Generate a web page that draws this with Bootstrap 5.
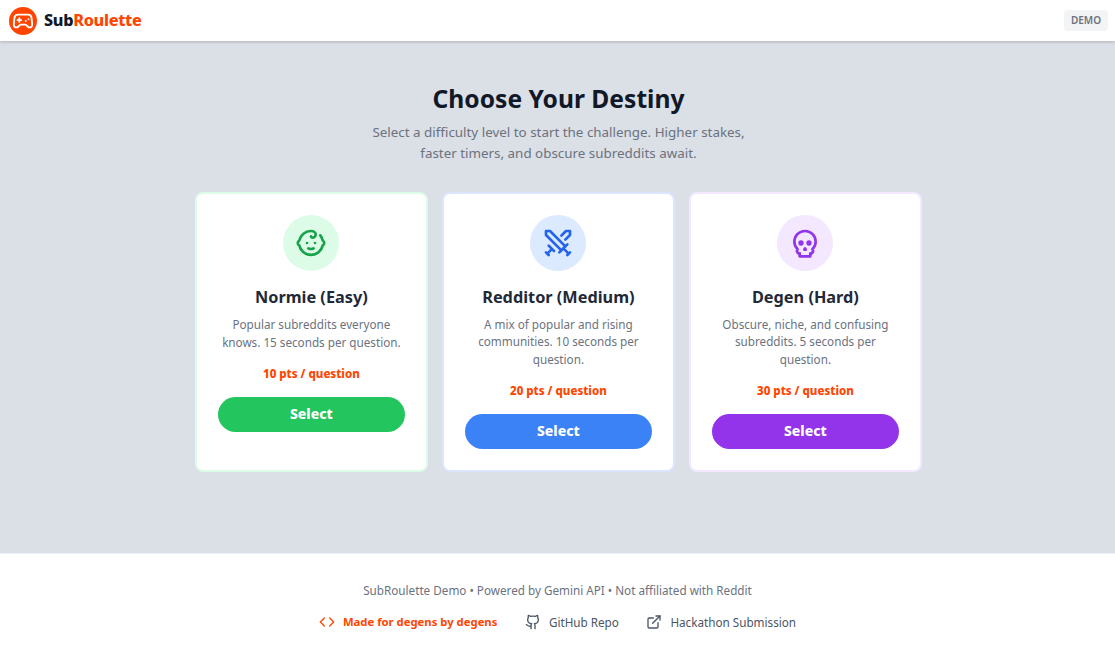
<!DOCTYPE html>
<html lang="en">
<head>
    <meta charset="UTF-8">
    <title>SubRoulette</title>
    <meta name="viewport" content="width=device-width, initial-scale=1">
    <link href="https://cdn.jsdelivr.net/npm/bootstrap@5.3.0/dist/css/bootstrap.min.css" rel="stylesheet">
    <style>
        body {
            height: 653px;
            overflow: hidden;
            font-family: "Noto Sans", "Liberation Sans", sans-serif;
            background: #fff;
            color: #111827;
        }
        .top-bar {
            height: 41px;
            padding: 0 7px 0 9px;
            box-shadow: 0 1px 3px rgba(0, 0, 0, .2);
            position: relative;
            z-index: 2;
        }
        .logo-disc {
            width: 28px;
            height: 28px;
            background: #ff4500;
        }
        .logo-text {
            font-size: 16.2px;
            font-weight: 800;
            letter-spacing: -.3px;
            color: #111827;
            margin-left: 7px;
        }
        .logo-text span { color: #ff4500; }
        .demo-tag {
            background: #f3f4f6;
            color: #6b7280;
            font-size: 10px;
            font-weight: 600;
            line-height: 15px;
            padding: 3px 7px;
            border-radius: 4px;
        }
        .stage {
            height: 512px;
            background: #dbdfe6;
            padding-top: 42px;
        }
        .stage-title {
            font-size: 24.6px;
            font-weight: 700;
            line-height: 32px;
            margin-bottom: 7px;
            margin-left: 2px;
            color: #111827;
        }
        .stage-sub {
            font-size: 13.4px;
            line-height: 21px;
            color: #6b7280;
            margin-bottom: 28px;
            margin-left: 2px;
        }
        .level-row {
            width: 727px;
            gap: 14.05px;
            margin-left: 1.8px;
        }
        .level-card {
            width: 233px;
            height: 280px;
            padding: 21px;
            background: #fff;
            border-radius: 8px;
            border: 2px solid;
        }
        .level-easy { border-color: #dcfce7; }
        .level-mid { border-color: #dbe6fe; }
        .level-hard { border-color: #f3e8ff; }
        .level-disc {
            width: 56px;
            height: 56px;
            margin-bottom: 15px;
        }
        .level-easy .level-disc { background: #dcfce7; color: #16a34a; }
        .level-mid .level-disc { background: #dbeafe; color: #2563eb; }
        .level-hard .level-disc { background: #f3e8ff; color: #9333ea; }
        .level-name {
            font-size: 16.3px;
            font-weight: 700;
            line-height: 22px;
            margin-bottom: 8px;
            color: #1f2937;
        }
        .level-desc {
            font-size: 11.7px;
            line-height: 17.5px;
            color: #6b7280;
            margin-bottom: 14px;
        }
        .level-pts {
            font-size: 11.5px;
            font-weight: 800;
            line-height: 18px;
            color: #ff4500;
            margin-bottom: 14px;
        }
        .pick-btn {
            height: 35px;
            border: 0;
            border-radius: 18px;
            padding: 0 0 2px;
            color: #fff;
            font-size: 14px;
            font-weight: 800;
            flex-shrink: 0;
        }
        .level-easy .pick-btn { background: #22c55e; }
        .level-mid .pick-btn { background: #3b82f6; }
        .level-hard .pick-btn { background: #9333ea; }
        .foot {
            height: 100px;
            padding-top: 28px;
            border-top: 1px solid #eef0f3;
        }
        .foot-line {
            font-size: 11.7px;
            line-height: 17px;
            color: #6b7280;
            margin-bottom: 14px;
        }
        .foot-links { gap: 27.5px; font-size: 11.7px; line-height: 18px; }
        .foot-item { color: #4b5563; text-decoration: none; }
        .foot-item.foot-made { color: #ff4500; font-weight: 700; font-size: 11.3px; }
    </style>
</head>
<body>
    <nav class="top-bar d-flex align-items-center justify-content-between bg-white">
        <div class="d-flex align-items-center">
            <div class="logo-disc rounded-circle d-flex align-items-center justify-content-center">
                <svg width="22" height="22" viewBox="0 0 24 24" fill="none" stroke="#fff" stroke-width="2" stroke-linecap="round" stroke-linejoin="round"><line x1="6" y1="11" x2="10" y2="11"/><line x1="8" y1="9" x2="8" y2="13"/><line x1="15" y1="12" x2="15.01" y2="12"/><line x1="18" y1="10" x2="18.01" y2="10"/><path d="M17.32 5H6.68a4 4 0 0 0-3.98 3.59c-.01.05-.01.1-.02.15C2.6 9.42 2 14.46 2 16a3 3 0 0 0 3 3c1 0 1.5-.5 2-1l1.41-1.41A2 2 0 0 1 9.83 16h4.34a2 2 0 0 1 1.41.59L17 18c.5.5 1 1 2 1a3 3 0 0 0 3-3c0-1.55-.6-6.58-.68-7.26-.01-.05-.01-.1-.02-.15A4 4 0 0 0 17.32 5z"/></svg>
            </div>
            <div class="logo-text">Sub<span>Roulette</span></div>
        </div>
        <div class="demo-tag">DEMO</div>
    </nav>

    <main class="stage d-flex flex-column align-items-center text-center">
        <h1 class="stage-title">Choose Your Destiny</h1>
        <p class="stage-sub">Select a difficulty level to start the challenge. Higher stakes,<br>faster timers, and obscure subreddits await.</p>
        <div class="level-row d-flex">
            <div class="level-card level-easy d-flex flex-column align-items-center">
                <div class="level-disc rounded-circle d-flex align-items-center justify-content-center">
                    <svg width="32" height="32" viewBox="0 0 24 24" fill="none" stroke="currentColor" stroke-width="2" stroke-linecap="round" stroke-linejoin="round"><path d="M9 12h.01"/><path d="M15 12h.01"/><path d="M10 16c.5.3 1.2.5 2 .5s1.500-.2 2-.5"/><path d="M19 6.300a9 9 0 0 1 1.800 3.900 2 2 0 0 1 0 3.600 9 9 0 0 1-17.600 0 2 2 0 0 1 0-3.600A9 9 0 0 1 12 3c2 0 3.500 1.100 3.500 2.500s-.9 2.500-2 2.500c-.8 0-1.500-.4-1.500-1"/></svg>
                </div>
                <h2 class="level-name">Normie (Easy)</h2>
                <p class="level-desc">Popular subreddits everyone knows. 15 seconds per question.</p>
                <div class="level-pts">10 pts / question</div>
                <button class="pick-btn w-100">Select</button>
            </div>
            <div class="level-card level-mid d-flex flex-column align-items-center">
                <div class="level-disc rounded-circle d-flex align-items-center justify-content-center">
                    <svg width="32" height="32" viewBox="0 0 24 24" fill="none" stroke="currentColor" stroke-width="2" stroke-linecap="round" stroke-linejoin="round"><polyline points="14.500 17.500 3 6 3 3 6 3 17.500 14.500"/><line x1="13" y1="19" x2="19" y2="13"/><line x1="16" y1="16" x2="20" y2="20"/><line x1="19" y1="21" x2="21" y2="19"/><polyline points="14.500 6.500 18 3 21 3 21 6 17.500 9.500"/><line x1="5" y1="14" x2="9" y2="18"/><line x1="7" y1="17" x2="4" y2="20"/><line x1="3" y1="19" x2="5" y2="21"/></svg>
                </div>
                <h2 class="level-name">Redditor (Medium)</h2>
                <p class="level-desc">A mix of popular and rising communities. 10 seconds per question.</p>
                <div class="level-pts">20 pts / question</div>
                <button class="pick-btn w-100">Select</button>
            </div>
            <div class="level-card level-hard d-flex flex-column align-items-center">
                <div class="level-disc rounded-circle d-flex align-items-center justify-content-center">
                    <svg width="32" height="32" viewBox="0 0 24 24" fill="none" stroke="currentColor" stroke-width="2" stroke-linecap="round" stroke-linejoin="round"><circle cx="9" cy="12" r="1"/><circle cx="15" cy="12" r="1"/><path d="M8 20v2h8v-2"/><path d="m12.500 17-.5-1-.5 1h1z"/><path d="M16 20a2 2 0 0 0 1.560-3.250 8 8 0 1 0-11.120 0A2 2 0 0 0 8 20"/></svg>
                </div>
                <h2 class="level-name">Degen (Hard)</h2>
                <p class="level-desc">Obscure, niche, and confusing subreddits. 5 seconds per question.</p>
                <div class="level-pts">30 pts / question</div>
                <button class="pick-btn w-100">Select</button>
            </div>
        </div>
    </main>

    <footer class="foot text-center bg-white">
        <div class="foot-line">SubRoulette Demo • Powered by Gemini API • Not affiliated with Reddit</div>
        <div class="foot-links d-flex justify-content-center align-items-center">
            <a href="#" class="foot-item foot-made d-flex align-items-center gap-2">
                <svg width="16" height="16" viewBox="0 0 24 24" fill="none" stroke="currentColor" stroke-width="2" stroke-linecap="round" stroke-linejoin="round"><polyline points="16 18 22 12 16 6"/><polyline points="8 6 2 12 8 18"/></svg>
                <span>Made for degens by degens</span>
            </a>
            <a href="#" class="foot-item d-flex align-items-center gap-2">
                <svg width="16" height="16" viewBox="0 0 24 24" fill="none" stroke="currentColor" stroke-width="2" stroke-linecap="round" stroke-linejoin="round"><path d="M15 22v-4a4.800 4.800 0 0 0-1-3.500c3 0 6-2 6-5.500.08-1.250-.27-2.480-1-3.500.28-1.150.28-2.350 0-3.500 0 0-1 0-3 1.500-2.640-.5-5.360-.5-8 0C6 2 5 2 5 2c-.3 1.150-.3 2.350 0 3.500A5.400 5.400 0 0 0 4 9c0 3.500 3 5.500 6 5.500-.39.490-.68 1.050-.85 1.650-.17.600-.22 1.230-.15 1.850v4"/><path d="M9 18c-4.510 2-5-2-7-2"/></svg>
                <span>GitHub Repo</span>
            </a>
            <a href="#" class="foot-item d-flex align-items-center gap-2">
                <svg width="16" height="16" viewBox="0 0 24 24" fill="none" stroke="currentColor" stroke-width="2" stroke-linecap="round" stroke-linejoin="round"><path d="M18 13v6a2 2 0 0 1-2 2H5a2 2 0 0 1-2-2V8a2 2 0 0 1 2-2h6"/><polyline points="15 3 21 3 21 9"/><line x1="10" y1="14" x2="21" y2="3"/></svg>
                <span>Hackathon Submission</span>
            </a>
        </div>
    </footer>
    <script src="https://cdn.jsdelivr.net/npm/bootstrap@5.3.0/dist/js/bootstrap.bundle.min.js"></script>
</body>
</html>
